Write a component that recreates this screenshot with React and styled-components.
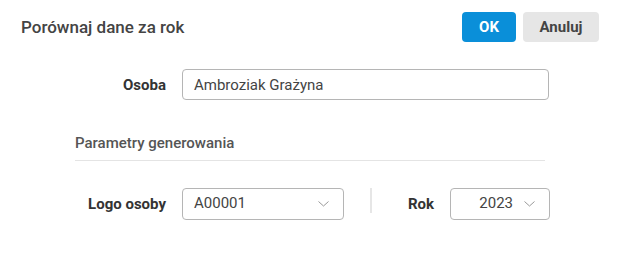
import React from 'react';
import styled, { createGlobalStyle } from 'styled-components';

const GlobalStyle = createGlobalStyle`
  body {
    margin: 0;
    background: #fff;
    font-family: Roboto, "Liberation Sans", sans-serif;
  }
`;

const Dialog = styled.div`
  width: 621px;
  height: 280px;
  box-sizing: border-box;
  padding: 12px 22px 0 21px;
`;

const Header = styled.div`
  display: flex;
  justify-content: space-between;
  align-items: center;
  height: 30px;
`;

const Title = styled.h1`
  margin: 0;
  font-size: 17px;
  font-weight: 500;
  color: #444;
`;

const Buttons = styled.div`
  display: flex;
  gap: 7px;
`;

const Button = styled.button`
  height: 30px;
  padding: 0;
  width: ${(p) => p.$width}px;
  border: none;
  border-radius: 4px;
  font-family: inherit;
  font-size: 15px;
  font-weight: 700;
  background: ${(p) => (p.$primary ? '#0a8fd9' : '#e6e6e6')};
  color: ${(p) => (p.$primary ? '#fff' : '#444')};
`;

const Form = styled.div`
  width: 475px;
  margin: 27px 0 0 54px;
  display: flex;
  flex-direction: column;
`;

const Row = styled.div`
  display: flex;
  align-items: center;
`;

const Label = styled.label`
  width: ${(p) => p.$width || 91}px;
  flex-shrink: 0;
  text-align: right;
  padding-right: ${(p) => p.$gap || 16}px;
  box-sizing: content-box;
  font-size: 15px;
  font-weight: 700;
  color: #333;
`;

const TextInput = styled.div`
  width: 367px;
  height: 31px;
  box-sizing: border-box;
  border: 1px solid #b5b5b5;
  border-radius: 4px;
  padding: 0 11px;
  display: flex;
  align-items: center;
  font-size: 15px;
  color: #444;
`;

const Section = styled.div`
  margin-top: 34px;
  width: 470px;
  padding-bottom: 8px;
  border-bottom: 1px solid #e4e4e4;
  font-size: 15px;
  font-weight: 500;
  color: #555;
`;

const SelectRow = styled(Row)`
  margin-top: 27px;
  margin-left: -91px;
  padding-left: 91px;
`;

const Select = styled.div`
  width: ${(p) => p.$width}px;
  height: 32px;
  box-sizing: border-box;
  border: 1px solid #b5b5b5;
  border-radius: 4px;
  padding: 0 14px 0 11px;
  display: flex;
  align-items: center;
  gap: 11px;
  font-size: 15px;
  color: #444;
`;

const Value = styled.span`
  flex: 1;
  text-align: ${(p) => (p.$right ? 'right' : 'left')};
  margin-top: -3px;
`;

const Separator = styled.div`
  width: 2px;
  height: 25px;
  margin: 0 36px 0 26px;
  align-self: flex-start;
  background: #e6e6e6;
`;

const Chevron = () => (
  <svg width="11" height="6" viewBox="0 0 11 6" fill="none">
    <path d="M0.5 0.5 L5.5 5 L10.5 0.5" stroke="#999" strokeWidth="1" />
  </svg>
);

export default function App() {
  return (
    <Dialog>
      <GlobalStyle />
      <Header>
        <Title>Porównaj dane za rok</Title>
        <Buttons>
          <Button $primary $width={54}>OK</Button>
          <Button $width={76}>Anuluj</Button>
        </Buttons>
      </Header>
      <Form>
        <Row>
          <Label>Osoba</Label>
          <TextInput>Ambroziak Grażyna</TextInput>
        </Row>
        <Section>Parametry generowania</Section>
        <SelectRow>
          <Label>Logo osoby</Label>
          <Select $width={162}>
            <Value>A00001</Value>
            <Chevron />
          </Select>
          <Separator />
          <Label $width={25} $gap={17}>Rok</Label>
          <Select $width={100}>
            <Value $right>2023</Value>
            <Chevron />
          </Select>
        </SelectRow>
      </Form>
    </Dialog>
  );
}
